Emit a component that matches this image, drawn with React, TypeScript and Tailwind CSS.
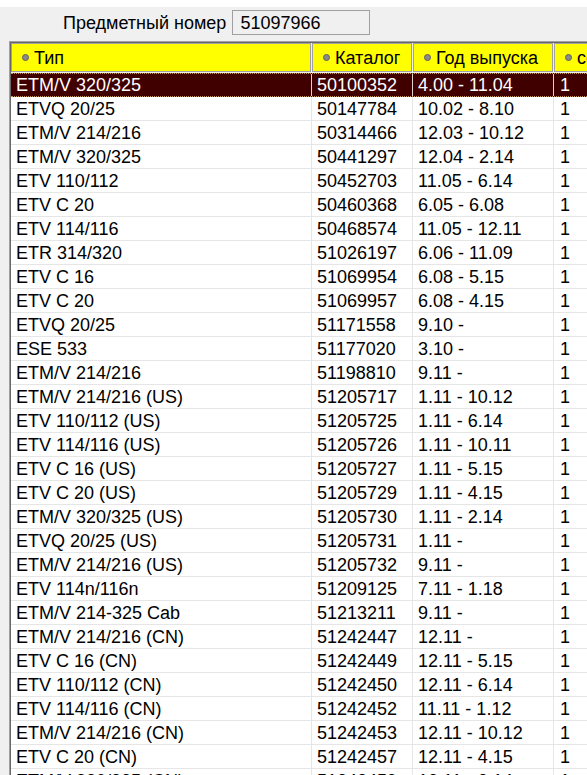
import React from 'react';

type Row = { type: string; catalog: string; years: string; qty: string };

const rows: Row[] = [
  { type: 'ETM/V 320/325', catalog: '50100352', years: '4.00 - 11.04', qty: '1' },
  { type: 'ETVQ 20/25', catalog: '50147784', years: '10.02 - 8.10', qty: '1' },
  { type: 'ETM/V 214/216', catalog: '50314466', years: '12.03 - 10.12', qty: '1' },
  { type: 'ETM/V 320/325', catalog: '50441297', years: '12.04 - 2.14', qty: '1' },
  { type: 'ETV 110/112', catalog: '50452703', years: '11.05 - 6.14', qty: '1' },
  { type: 'ETV C 20', catalog: '50460368', years: '6.05 - 6.08', qty: '1' },
  { type: 'ETV 114/116', catalog: '50468574', years: '11.05 - 12.11', qty: '1' },
  { type: 'ETR 314/320', catalog: '51026197', years: '6.06 - 11.09', qty: '1' },
  { type: 'ETV C 16', catalog: '51069954', years: '6.08 - 5.15', qty: '1' },
  { type: 'ETV C 20', catalog: '51069957', years: '6.08 - 4.15', qty: '1' },
  { type: 'ETVQ 20/25', catalog: '51171558', years: '9.10 -', qty: '1' },
  { type: 'ESE 533', catalog: '51177020', years: '3.10 -', qty: '1' },
  { type: 'ETM/V 214/216', catalog: '51198810', years: '9.11 -', qty: '1' },
  { type: 'ETM/V 214/216 (US)', catalog: '51205717', years: '1.11 - 10.12', qty: '1' },
  { type: 'ETV 110/112 (US)', catalog: '51205725', years: '1.11 - 6.14', qty: '1' },
  { type: 'ETV 114/116 (US)', catalog: '51205726', years: '1.11 - 10.11', qty: '1' },
  { type: 'ETV C 16 (US)', catalog: '51205727', years: '1.11 - 5.15', qty: '1' },
  { type: 'ETV C 20 (US)', catalog: '51205729', years: '1.11 - 4.15', qty: '1' },
  { type: 'ETM/V 320/325 (US)', catalog: '51205730', years: '1.11 - 2.14', qty: '1' },
  { type: 'ETVQ 20/25 (US)', catalog: '51205731', years: '1.11 -', qty: '1' },
  { type: 'ETM/V 214/216 (US)', catalog: '51205732', years: '9.11 -', qty: '1' },
  { type: 'ETV 114n/116n', catalog: '51209125', years: '7.11 - 1.18', qty: '1' },
  { type: 'ETM/V 214-325 Cab', catalog: '51213211', years: '9.11 -', qty: '1' },
  { type: 'ETM/V 214/216 (CN)', catalog: '51242447', years: '12.11 -', qty: '1' },
  { type: 'ETV C 16 (CN)', catalog: '51242449', years: '12.11 - 5.15', qty: '1' },
  { type: 'ETV 110/112 (CN)', catalog: '51242450', years: '12.11 - 6.14', qty: '1' },
  { type: 'ETV 114/116 (CN)', catalog: '51242452', years: '11.11 - 1.12', qty: '1' },
  { type: 'ETM/V 214/216 (CN)', catalog: '51242453', years: '12.11 - 10.12', qty: '1' },
  { type: 'ETV C 20 (CN)', catalog: '51242457', years: '12.11 - 4.15', qty: '1' },
  { type: 'ETM/V 320/325 (CN)', catalog: '51242459', years: '12.11 - 2.14', qty: '1' },
];

const headers = ['Тип', 'Каталог', 'Год выпуска', 'серия'];

// ширины колонок как в гриде
const cols = 'grid grid-cols-[301px_101px_141px_200px]';

function HeaderCell({ label }: { label: string }) {
  return (
    <div className="bg-[#f0f0f0] pr-px pb-px">
      <div className="h-[29px] bg-[#ffff00] border border-[#a0a0a0] flex items-center pl-[10px] gap-[5px] whitespace-nowrap overflow-hidden">
        <span className="w-[7px] h-[7px] rounded-full bg-[#8a8a8a] border border-[#5e5e5e] shrink-0" />
        <span>{label}</span>
      </div>
    </div>
  );
}

export default function App() {
  return (
    <div
      className="w-[587px] h-[775px] overflow-hidden bg-[#f0f0f0] text-[18px] text-black leading-none"
      style={{ fontFamily: '"Liberation Sans", Arial, sans-serif' }}
    >
      <div className="h-[7px] bg-white" />

      {/* Поле предметного номера */}
      <div className="flex items-center mt-[3px] pl-[63px] gap-[6px]">
        <span>Предметный номер</span>
        <div className="w-[138px] h-[25px] border border-[#a0a0a0] bg-[#f0f0f0] flex items-center pl-[7px]">
          51097966
        </div>
      </div>

      {/* Таблица */}
      <div className="mt-[6px] ml-[9px] w-[800px] border-l border-t border-[#a0a0a0]">
        <div className="border-l border-t border-[#696969] bg-white">
          <div className={cols}>
            {headers.map((h) => (
              <HeaderCell key={h} label={h} />
            ))}
          </div>

          {rows.map((r, i) => {
            const selected = i === 0;
            const line = selected ? 'border-[#e0d0d0]' : 'border-[#e6e6e6]';
            return (
              <div
                key={i}
                className={
                  cols +
                  ' h-[24px] ' +
                  (selected
                    ? 'bg-[#400000] text-white border-y border-dotted border-[#c89a50]'
                    : 'border-b border-[#e6e6e6]')
                }
              >
                <div className={'flex items-center pl-[5px] whitespace-nowrap border-r ' + line}>{r.type}</div>
                <div className={'flex items-center pl-[5px] border-r ' + line}>{r.catalog}</div>
                <div className={'flex items-center pl-[5px] border-r ' + line}>{r.years}</div>
                <div className="flex items-center pl-[6px]">{r.qty}</div>
              </div>
            );
          })}
        </div>
      </div>
    </div>
  );
}
